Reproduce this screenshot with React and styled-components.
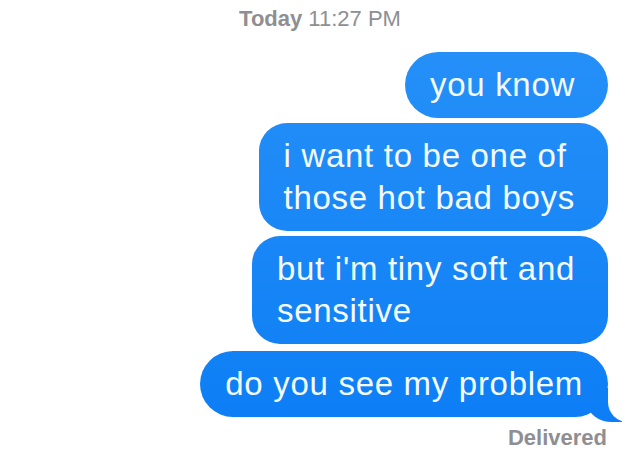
import styled, { createGlobalStyle } from 'styled-components';

const GlobalStyle = createGlobalStyle`
  html, body {
    margin: 0;
    padding: 0;
    background: #ffffff;
  }
  body {
    font-family: "Liberation Sans", Arial, sans-serif;
  }
`;

const blue = 'linear-gradient(180deg, #2892f8 0%, #1886f6 55%, #0a7cf5 100%)';

const Thread = styled.div`
  width: 640px;
  height: 458px;
  box-sizing: border-box;
  padding: 8px 32px 0 0;
  display: flex;
  flex-direction: column;
  align-items: flex-end;
  overflow: hidden;
`;

const Stamp = styled.div`
  align-self: stretch;
  padding-left: 32px;
  text-align: center;
  font-size: 22px;
  line-height: 22px;
  color: #8e8e93;
  margin-bottom: 22px;

  b {
    font-weight: bold;
  }
`;

const Bubble = styled.div`
  position: relative;
  isolation: isolate;
  box-sizing: border-box;
  padding: 12px ${p => (p.$tail ? 25 : 33)}px 12px 25px;
  margin-top: ${p => p.$gap}px;
  border-radius: ${p => (p.$lines > 1 ? 28 : 33)}px;
  background: ${blue};
  background-attachment: fixed;
  color: #f4fbff;
  font-size: 33px;
  line-height: 42px;
  letter-spacing: 0.7px;
  white-space: nowrap;

  ${p => p.$tail && `
    &::before {
      content: "";
      position: absolute;
      z-index: -1;
      right: -14px;
      bottom: -5px;
      width: 34px;
      height: 34px;
      background: ${blue};
      background-attachment: fixed;
      border-bottom-left-radius: 24px 18px;
    }
    &::after {
      content: "";
      position: absolute;
      z-index: -1;
      right: -40px;
      bottom: -5px;
      width: 40px;
      height: 36px;
      background: #ffffff;
      border-bottom-left-radius: 20px;
    }
  `}
`;

const Status = styled.div`
  margin-top: 10px;
  margin-right: 1px;
  font-size: 22px;
  line-height: 22px;
  font-weight: bold;
  color: #8e8e93;
`;

const messages = [
  { lines: ['you know'], gap: 0 },
  { lines: ['i want to be one of', 'those hot bad boys'], gap: 5 },
  { lines: ["but i'm tiny soft and", 'sensitive'], gap: 5 },
  { lines: ['do you see my problem'], gap: 7, tail: true },
];

export default function App() {
  return (
    <>
      <GlobalStyle />
      <Thread>
        <Stamp>
          <b>Today</b> 11:27 PM
        </Stamp>
        {messages.map((m, i) => (
          <Bubble key={i} $gap={m.gap} $lines={m.lines.length} $tail={m.tail}>
            {m.lines.map((line, j) => (
              <div key={j}>{line}</div>
            ))}
          </Bubble>
        ))}
        <Status>Delivered</Status>
      </Thread>
    </>
  );
}
